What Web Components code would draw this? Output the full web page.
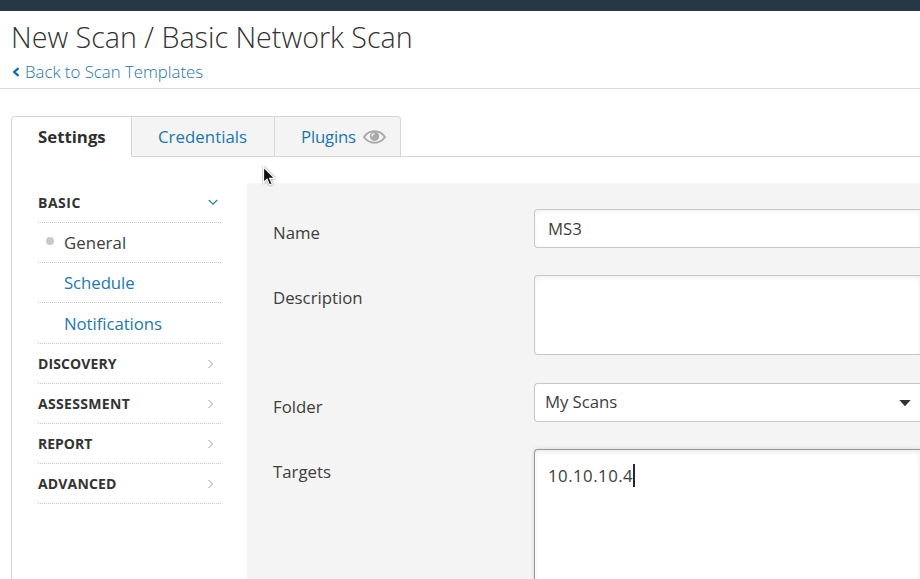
<!DOCTYPE html>
<html lang="en">
<head>
<meta charset="utf-8">
<title>New Scan / Basic Network Scan</title>
<style>
html,body{margin:0;height:579px;overflow:hidden;background:#fff}
body{font-family:"Open Sans","Noto Sans",sans-serif;font-size:16.8px;color:#3d3d3d}
</style>
</head>
<body>
<scan-page>
  <page-header slot="header">New Scan / Basic Network Scan<span slot="back">Back to Scan Templates</span></page-header>
  <tab-item slot="tabs" active style="--w:121px">Settings</tab-item>
  <tab-item slot="tabs" style="--w:143px;--ls:.05px">Credentials</tab-item>
  <tab-item slot="tabs" style="--w:126px;--ls:-.2px">Plugins<eye-icon slot="icon"></eye-icon></tab-item>
  <nav-group slot="nav" open style="--ls:.5px">BASIC</nav-group>
  <nav-link slot="nav" current style="--ls:.07px">General</nav-link>
  <nav-link slot="nav" style="--ls:-.08px">Schedule</nav-link>
  <nav-link slot="nav" style="--h:41px;--ls:-.07px">Notifications</nav-link>
  <nav-group slot="nav" style="--ls:.1px">DISCOVERY</nav-group>
  <nav-group slot="nav" style="--ls:.33px">ASSESSMENT</nav-group>
  <nav-group slot="nav">REPORT</nav-group>
  <nav-group slot="nav" style="--ls:.15px">ADVANCED</nav-group>
  <form-field slot="form" label="Name" style="--h:39px;--mb:27px;--lt:12px">MS3</form-field>
  <form-field slot="form" label="Description" style="--h:80px;--mb:28px;--lt:11px"></form-field>
  <form-field slot="form" label="Folder" kind="select" style="--h:39px;--mb:27px;--lt:12px;--ls:-.08px">My Scans</form-field>
  <form-field slot="form" label="Targets" kind="focus" style="--h:180px;--lt:11px;--ls:.48px">10.10.10.4</form-field>
</scan-page>
<mouse-pointer></mouse-pointer>
<script>
const define = (name, html) => {
  const t = document.createElement('template');
  t.innerHTML = html;
  customElements.define(name, class extends HTMLElement {
    constructor() {
      super();
      this.attachShadow({mode: 'open'}).append(t.content.cloneNode(true));
    }
    connectedCallback() {
      const label = this.shadowRoot.querySelector('.label');
      if (label) label.textContent = this.getAttribute('label');
    }
  });
};

define('scan-page', `<style>
  :host{display:block;height:579px;overflow:hidden}
  .bar{height:11px;background:#263746}
  .tabs{display:flex;height:41px;margin:27px 0 0 11px}
  .tabs::after{content:"";flex:1;border-bottom:1px solid #d9d9d9}
  .body{display:flex;margin-left:11px;border-left:1px solid #d3d3d3;height:422px}
  nav{width:183px;margin:26px 26px 0 26px;flex:none}
  .form{flex:1;margin-top:26px;padding:26px 0 0 26px;background:#f4f4f4}
</style>
<div class="bar"></div><slot name="header"></slot>
<div class="tabs"><slot name="tabs"></slot></div>
<div class="body"><nav><slot name="nav"></slot></nav><div class="form"><slot name="form"></slot></div></div>`);

define('page-header', `<style>
  :host{display:block;box-sizing:border-box;height:78px;border-bottom:1px solid #d9dbdc;padding:6px 0 0 11px;white-space:nowrap}
  h1{margin:0;font-size:28.650px;font-weight:300;line-height:40px;color:#333}
  .back{display:flex;align-items:center;gap:5px;font-size:16.8px;font-weight:300;line-height:24px;margin-top:3px;color:#1d76a8}
  svg{display:block;margin:0 0 1px 1px}
</style>
<h1><slot></slot></h1>
<div class="back"><svg width="8" height="10" viewBox="0 0 8 10"><path d="M6.500 1.200 2.300 5l4.200 3.800" fill="none" stroke="#0d72ad" stroke-width="2.300"/></svg><slot name="back"></slot></div>`);

define('tab-item', `<style>
  :host{display:flex;box-sizing:border-box;width:var(--w);padding-left:26px;align-items:center;gap:7px;border:1px solid #d6d6d6;border-left:0;background:#f4f4f4;color:#2077ac;line-height:39px;white-space:nowrap;letter-spacing:var(--ls,0)}
  :host([active]){background:#fff;border-left:1px solid #d3d3d3;border-bottom-color:#fff;border-top-left-radius:4px;font-weight:700;color:#2f2f2f}
  :host(:last-of-type){border-top-right-radius:4px}
</style><slot></slot><slot name="icon"></slot>`);

define('eye-icon', `<style>:host{display:block;line-height:0}</style>
<svg width="23" height="14" viewBox="0 0 23 14"><path d="M1 7C6-.6 17-.6 22 7 17 14.600 6 14.600 1 7Z" fill="none" stroke="#a9a9a9" stroke-width="1.900"/><circle cx="11.500" cy="6.300" r="4.700" fill="#a9a9a9"/><path d="M8.900 6.500a2.700 2.700 0 0 1 2.700-2.800" fill="none" stroke="#f4f4f4" stroke-width="1.300"/></svg>`);

define('nav-group', `<style>
  :host{display:flex;box-sizing:border-box;height:40px;align-items:center;justify-content:space-between;border-bottom:1px dotted #c9c9c9;font-size:14px;font-weight:700;color:#333;letter-spacing:var(--ls,0)}
  svg{margin-right:7px}
  .down{display:none;margin-right:3px}
  :host([open]) .down{display:block}
  :host([open]) .right{display:none}
</style><slot></slot>
<svg class="down" width="10" height="7" viewBox="0 0 10 7"><path d="M.8 1 5 5.200 9.200 1" fill="none" stroke="#2387a8" stroke-width="1.300"/></svg>
<svg class="right" width="6" height="10" viewBox="0 0 6 10"><path d="M.6 1l4 4-4 4" fill="none" stroke="#c4c4c4" stroke-width="1.200"/></svg>`);

define('nav-link', `<style>
  :host{display:flex;box-sizing:border-box;height:var(--h,40px);align-items:center;border-bottom:1px dotted #c9c9c9;color:#1f78ae;letter-spacing:var(--ls,0)}
  i{width:8px;height:8px;border-radius:50%;margin:0 10px 3px 8px}
  :host([current]){color:#3d3d3d}
  :host([current]) i{background:#c9c9c9}
</style><i></i><slot></slot>`);

define('form-field', `<style>
  :host{display:flex;height:var(--h);margin-bottom:var(--mb,0)}
  .label{width:261px;flex:none;line-height:24px;padding-top:var(--lt)}
  .box{flex:1;box-sizing:border-box;display:flex;border:1px solid #c8c8c8;border-right:0;border-radius:4px 0 0 4px;background:#fff;padding:7px 0 0 13px;line-height:24px;letter-spacing:var(--ls,0);box-shadow:inset 0 2px 4px rgba(0,0,0,.06)}
  svg,.caret{display:none}
  :host([kind=select]) .box{padding:6px 9px 0 10px;justify-content:space-between;box-shadow:none}
  :host([kind=select]) svg{display:block;margin-top:9px}
  :host([kind=focus]) .box{padding-top:14px;border-color:#999;box-shadow:inset 0 2px 5px rgba(0,0,0,.09),0 0 4px rgba(0,0,0,.14)}
  :host([kind=focus]) .caret{display:block;width:2px;height:23px;background:#25272b}
</style><div class="label"></div>
<div class="box"><slot></slot><span class="caret"></span><svg width="12" height="8" viewBox="0 0 12 8"><path d="M.3 1h11.400L6 7.200Z" fill="#333"/></svg></div>`);

/* The pointer floats above the page. */
define('mouse-pointer', `<style>:host{position:absolute;left:262px;top:166px;line-height:0}</style>
<svg width="14" height="21" viewBox="0 0 14 21"><path d="M1.500 1v15.500l3.500-3.200 2.600 5.700 2.600-1.200-2.500-5.400h5Z" fill="#111" stroke="#fff" stroke-width="1.200" style="filter:drop-shadow(0 0 .8px #0008)"/></svg>`);
</script>
</body>
</html>
